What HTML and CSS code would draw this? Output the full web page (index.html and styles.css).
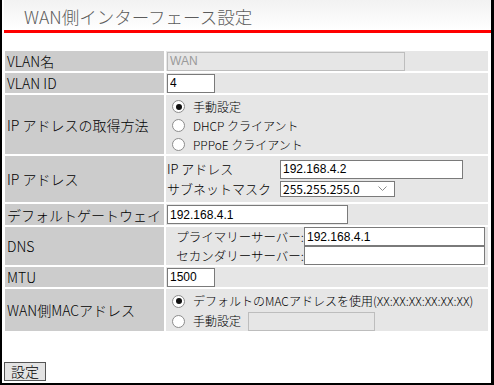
FILE: index.html
```html
<!DOCTYPE html>
<html lang="ja">
<head>
<meta charset="utf-8">
<title>WAN側インターフェース設定</title>
<link rel="stylesheet" href="styles.css">
</head>
<body>
<div class="frame">
  <h1 class="title">WAN側インターフェース設定</h1>
  <form class="form">
    <table class="settings">
      <colgroup><col class="c-label"><col class="c-value"></colgroup>
      <tr class="h20">
        <th>VLAN名</th>
        <td><input class="txt txt-dis w-vlan" value="WAN" disabled></td>
      </tr>
      <tr class="h20">
        <th>VLAN ID</th>
        <td><input class="txt w-short" value="4"></td>
      </tr>
      <tr class="h59">
        <th>IP アドレスの取得方法</th>
        <td>
          <div class="radios radios-ip">
            <label class="radio-line"><input type="radio" name="mode" class="rb" checked><span>手動設定</span></label>
            <label class="radio-line"><input type="radio" name="mode" class="rb"><span>DHCP クライアント</span></label>
            <label class="radio-line"><input type="radio" name="mode" class="rb"><span>PPPoE クライアント</span></label>
          </div>
        </td>
      </tr>
      <tr class="h46">
        <th>IP アドレス</th>
        <td>
          <div class="ipgrid">
            <span class="sub">IP アドレス</span>
            <input class="txt w-ip" value="192.168.4.2">
            <span class="sub">サブネットマスク</span>
            <span class="selwrap">
              <select class="sel">
                <option>255.255.255.0</option>
              </select>
              <svg class="chev" width="9" height="6" viewBox="0 0 9 6"><path d="M0.5 0.5 L4.5 4.5 L8.5 0.5" fill="none" stroke="#8a8a8a" stroke-width="1"/></svg>
            </span>
          </div>
        </td>
      </tr>
      <tr class="h21">
        <th>デフォルトゲートウェイ</th>
        <td><input class="txt w-gw" value="192.168.4.1"></td>
      </tr>
      <tr class="h38">
        <th>DNS</th>
        <td>
          <div class="dnsgrid">
            <span class="dlabel">プライマリーサーバー:</span>
            <input class="txt w-dns" value="192.168.4.1">
            <span class="dlabel">セカンダリーサーバー:</span>
            <input class="txt w-dns" value="">
          </div>
        </td>
      </tr>
      <tr class="h20">
        <th>MTU</th>
        <td><input class="txt w-short" value="1500"></td>
      </tr>
      <tr class="h42">
        <th>WAN側MACアドレス</th>
        <td>
          <div class="radios radios-mac">
            <label class="radio-line mac-line"><input type="radio" name="mac" class="rb" checked><span>デフォルトのMACアドレスを使用(XX:XX:XX:XX:XX:XX)</span></label>
            <label class="radio-line mac-line"><input type="radio" name="mac" class="rb"><span>手動設定</span><input class="txt txt-dis w-mac" disabled></label>
          </div>
        </td>
      </tr>
    </table>
    <div class="actions"><button type="button" class="btn">設定</button></div>
  </form>
</div>
</body>
</html>
```

FILE: styles.css
```css
html, body {
  margin: 0;
  padding: 0;
  background: #fff;
}
body {
  font-family: "Noto Sans CJK JP", "Noto Sans", sans-serif;
  font-weight: 300;
  color: #000;
}
.frame {
  box-sizing: border-box;
  width: 494px;
  height: 385px;
  border-style: solid;
  border-color: #000;
  border-width: 0 3px 2px 2px;
  display: flex;
  flex-direction: column;
}
.title {
  box-sizing: content-box;
  margin: 0 0 0 2px;
  height: 30px;
  border-bottom: 3px solid #ff0000;
  padding-left: 20px;
  font-size: 17.5px;
  font-weight: 300;
  line-height: 34px;
  color: #5c5c5c;
  background: linear-gradient(#f2f2f2, #ffffff);
  white-space: nowrap;
  overflow: hidden;
}
.form {
  display: flex;
  flex-direction: column;
}
.settings {
  margin: 16px 0 0 1px;
  border-collapse: separate;
  border-spacing: 2px;
  table-layout: fixed;
  width: 487px;
}
.c-label { width: 159px; }
.c-value { width: 322px; }
.settings th {
  background: #cccccc;
  font-weight: 300;
  font-size: 14px;
  line-height: 16px;
  text-align: left;
  padding: 0 0 0 2px;
  white-space: nowrap;
  vertical-align: middle;
}
.settings td {
  background: #e6e6e6;
  padding: 0 0 0 1px;
  vertical-align: middle;
  font-size: 13px;
  line-height: 16px;
}
.h20 { height: 20px; }
.h21 { height: 21px; }
.h59 { height: 59px; }
.h46 { height: 46px; }
.h38 { height: 38px; }
.h42 { height: 42px; }

.txt {
  box-sizing: border-box;
  height: 19px;
  margin: 0;
  padding: 0 2px;
  border: 1px solid #7a7a7a;
  background: #fff;
  font-family: "Liberation Sans", Arial, sans-serif;
  font-size: 12px;
  color: #000;
  display: block;
  outline: none;
}
.txt-dis {
  background: #e6e6e6;
  border-color: #bdbdbd;
  color: #9a9a9a;
}
.w-vlan { width: 238px; }
.w-short { width: 48px; }
.w-ip { width: 183px; }
.w-gw { width: 181px; }
.w-dns { width: 181px; }
.w-mac { width: 127px; margin-left: 7px; }

.radios {
  display: flex;
  flex-direction: column;
}
.radios-ip { padding-top: 2px; }
.radios-mac { padding-top: 2px; }
.radio-line {
  display: flex;
  align-items: center;
  height: 19px;
  font-size: 12px;
  white-space: nowrap;
}
.mac-line { height: 20px; }
.rb {
  appearance: none;
  -webkit-appearance: none;
  box-sizing: border-box;
  width: 13px;
  height: 13px;
  margin: 0 8px 0 5px;
  border: 1px solid #8c8c8c;
  border-radius: 50%;
  background: #fff;
  flex: none;
  display: grid;
  place-items: center;
}
.rb:checked::after {
  content: "";
  width: 6px;
  height: 6px;
  border-radius: 50%;
  background: #111;
}

.ipgrid {
  display: grid;
  grid-template-columns: 113px auto;
  grid-auto-rows: 20px;
  align-items: center;
  justify-items: start;
}
.sub {
  font-size: 13px;
  white-space: nowrap;
}
.selwrap {
  position: relative;
  display: block;
}
.sel {
  appearance: none;
  -webkit-appearance: none;
  box-sizing: border-box;
  width: 115px;
  height: 16px;
  margin: 0;
  padding: 0 0 0 2px;
  border: 1px solid #7a7a7a;
  border-radius: 0;
  background: #fff;
  font-family: "Noto Sans CJK JP", sans-serif;
  font-size: 12px;
  line-height: 14px;
  color: #000;
  display: block;
}
.chev {
  position: absolute;
  right: 8px;
  top: 5px;
  pointer-events: none;
}

.dnsgrid {
  display: grid;
  grid-template-columns: 137px auto;
  grid-auto-rows: 19px;
  align-items: center;
}
.dlabel {
  text-align: right;
  font-size: 12.5px;
  white-space: nowrap;
}

.actions {
  display: flex;
  margin: 29px 0 0 2px;
}
.btn {
  box-sizing: border-box;
  display: block;
  width: 42px;
  height: 19px;
  margin: 0;
  padding: 0;
  border: 1px solid #555;
  background: #e3e3e3;
  font-family: "Noto Sans CJK JP", sans-serif;
  font-weight: 300;
  font-size: 14px;
  line-height: 17px;
  color: #000;
}
```
